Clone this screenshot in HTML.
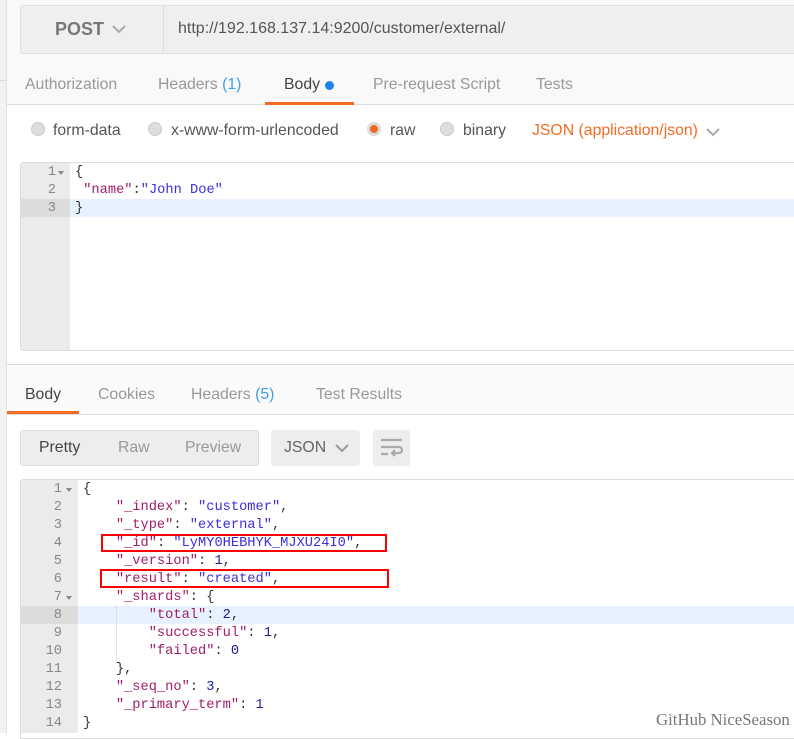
<!DOCTYPE html>
<html><head><meta charset="utf-8"><style>
*{margin:0;padding:0;box-sizing:border-box}
body{width:794px;height:733px;overflow:hidden;background:#fff;font-family:"Liberation Sans",sans-serif;position:relative;font-size:15.8px}
.a{position:absolute;white-space:nowrap}
.mono{font-family:"Liberation Mono",monospace;font-size:13.7px}
.k{color:#a11d6a}.s{color:#3a2ee0}.n{color:#1b1b9a}
.g{color:#999}
.radio{position:absolute;width:14px;height:14px;border-radius:50%;background:#ddd;border:1px solid #ccc}
</style></head><body>
<div class="a" style="left:0;top:0;width:7px;height:733px;background:#f2f2f2;border-right:1px solid #e2e2e2"></div>
<div class="a" style="left:0;top:80px;width:7px;height:1px;background:#ddd"></div>
<div class="a" style="left:7px;top:0;width:787px;height:105px;background:#f9f9f9;border-bottom:1px solid #ddd"></div>
<div class="a" style="left:20px;top:5px;width:774px;height:49px;background:#efefef;border:1px solid #e0e0e0;border-right:none;border-radius:3px 0 0 3px"></div>
<div class="a" style="left:163px;top:6px;width:1px;height:47px;background:#ddd"></div>
<div class="a" style="left:55px;top:19px;font-size:18px;font-weight:bold;color:#777">POST</div>
<svg class="a" style="left:111px;top:24px" width="16" height="10"><path d="M2 2l6 6 6-6" stroke="#aaa" stroke-width="2" fill="none"/></svg>
<div class="a" style="left:178px;top:20px;color:#555;font-size:16px">http://192.168.137.14:9200/customer/external/</div>
<div class="a g" style="left:25px;top:76px">Authorization</div>
<div class="a g" style="left:158px;top:76px">Headers <span style="color:#3fa0e8">(1)</span></div>
<div class="a" style="left:284px;top:76px;color:#444">Body</div>
<div class="a" style="left:325px;top:81px;width:9px;height:9px;border-radius:50%;background:#1b82e8"></div>
<div class="a" style="left:265px;top:102px;width:89px;height:3px;background:#f26b22"></div>
<div class="a g" style="left:373px;top:76px">Pre-request Script</div>
<div class="a g" style="left:536px;top:76px">Tests</div>
<div class="radio" style="left:31px;top:122px"></div><div class="a" style="left:53px;top:122px;color:#555">form-data</div>
<div class="radio" style="left:148px;top:122px"></div><div class="a" style="left:171px;top:122px;color:#555">x-www-form-urlencoded</div>
<div class="radio" style="left:367px;top:122px;background:#f26b22;border:3px solid #ddd"></div><div class="a" style="left:390px;top:122px;color:#555">raw</div>
<div class="radio" style="left:440px;top:122px"></div><div class="a" style="left:463px;top:122px;color:#555">binary</div>
<div class="a" style="left:532px;top:122px;color:#f26b22">JSON (application/json)</div>
<svg class="a" style="left:705px;top:127px" width="16" height="10"><path d="M2 2l6 6 6-6" stroke="#aaa" stroke-width="2" fill="none"/></svg>
<div class="a" style="left:20px;top:162px;width:774px;height:189px;border:1px solid #ddd;border-right:none;border-radius:3px 0 0 3px;background:#fff"></div>
<div class="a" style="left:21px;top:163px;width:49px;height:187px;background:#ebebeb"></div>
<div class="a" style="left:21px;top:199px;width:49px;height:18px;background:#dcdcdc"></div>
<div class="a" style="left:70px;top:199px;width:724px;height:18px;background:#e8f2fe"></div>
<div class="a mono" style="left:20px;top:164px;width:36px;text-align:right;line-height:18px;color:#888">1<br>2<br>3</div>
<div class="a" style="left:58px;top:171px;border:3px solid transparent;border-top:4px solid #888"></div>
<div class="a mono" style="left:75px;top:164px;line-height:18px;color:#333">{<br>&nbsp;<span class="k">"name"</span>:<span class="s">"John Doe"</span><br>}</div>
<div class="a" style="left:7px;top:364px;width:787px;height:51px;background:#fafafa;border-top:1px solid #ddd;border-bottom:1px solid #ddd"></div>
<div class="a" style="left:25px;top:386px;color:#444">Body</div>
<div class="a" style="left:7px;top:411px;width:72px;height:3px;background:#f26b22"></div>
<div class="a g" style="left:98px;top:386px">Cookies</div>
<div class="a g" style="left:191px;top:386px">Headers <span style="color:#3fa0e8">(5)</span></div>
<div class="a g" style="left:316px;top:386px">Test Results</div>
<div class="a" style="left:20px;top:430px;width:239px;height:36px;background:#ededed;border:1px solid #ddd;border-radius:3px"></div>
<div class="a" style="left:39px;top:439px;color:#444">Pretty</div>
<div class="a g" style="left:118px;top:439px">Raw</div>
<div class="a g" style="left:185px;top:439px">Preview</div>
<div class="a" style="left:271px;top:430px;width:89px;height:36px;background:#ededed;border-radius:3px"></div>
<div class="a" style="left:284px;top:439px;color:#666">JSON</div>
<svg class="a" style="left:334px;top:443px" width="16" height="10"><path d="M2 2l6 6 6-6" stroke="#999" stroke-width="2" fill="none"/></svg>
<div class="a" style="left:373px;top:430px;width:37px;height:36px;background:#ededed;border-radius:3px"></div>
<svg class="a" style="left:380px;top:437px" width="24" height="22"><path d="M1 3h21M1 10h18a3 3 0 0 1 0 6h-6M1 17h7M15 13l-3 3 3 3" stroke="#aaa" stroke-width="2.2" fill="none"/></svg>
<div class="a" style="left:20px;top:479px;width:774px;height:260px;border:1px solid #ddd;border-right:none;border-radius:3px 0 0 0;background:#fff"></div>
<div class="a" style="left:21px;top:480px;width:57px;height:253px;background:#ebebeb"></div>
<div class="a" style="left:21px;top:606px;width:57px;height:18px;background:#dcdcdc"></div>
<div class="a" style="left:78px;top:606px;width:716px;height:18px;background:#e8f2fe"></div>
<div class="a" style="left:116px;top:606px;width:0;height:54px;border-left:1px dotted #ccc"></div>
<div class="a mono" style="left:20px;top:481px;width:42px;text-align:right;line-height:18px;color:#888">1<br>2<br>3<br>4<br>5<br>6<br>7<br>8<br>9<br>10<br>11<br>12<br>13<br>14</div>
<div class="a" style="left:66px;top:488px;border:3px solid transparent;border-top:4px solid #888"></div>
<div class="a" style="left:66px;top:596px;border:3px solid transparent;border-top:4px solid #888"></div>
<div class="a mono" style="left:83px;top:481px;line-height:18px;color:#333;white-space:pre">{
    <span class="k">"_index"</span>: <span class="s">"customer"</span>,
    <span class="k">"_type"</span>: <span class="s">"external"</span>,
    <span class="k">"_id"</span>: <span class="s">"LyMY0HEBHYK_MJXU24I0"</span>,
    <span class="k">"_version"</span>: <span class="n">1</span>,
    <span class="k">"result"</span>: <span class="s">"created"</span>,
    <span class="k">"_shards"</span>: {
        <span class="k">"total"</span>: <span class="n">2</span>,
        <span class="k">"successful"</span>: <span class="n">1</span>,
        <span class="k">"failed"</span>: <span class="n">0</span>
    },
    <span class="k">"_seq_no"</span>: <span class="n">3</span>,
    <span class="k">"_primary_term"</span>: <span class="n">1</span>
}</div>
<div class="a" style="left:101px;top:534px;width:286px;height:18px;border:2px solid #f00"></div>
<div class="a" style="left:100px;top:569px;width:289px;height:19px;border:2px solid #f00"></div>
<div class="a" style="left:656px;top:710px;font-family:'Liberation Serif',serif;font-size:16.8px;color:#777">GitHub NiceSeason</div>
</body></html>
